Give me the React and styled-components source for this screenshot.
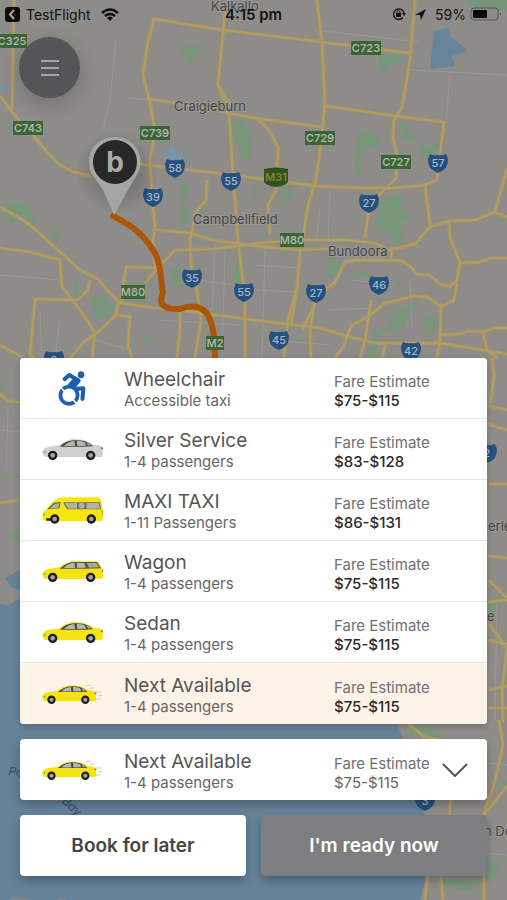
import { useState } from "react";
import styled, { createGlobalStyle } from "styled-components";
import { FaAccessibleIcon } from "react-icons/fa";

const TAXIS = [
  { id: "wheelchair", name: "Wheelchair", info: "Accessible taxi", fare: "$75-$115" },
  { id: "silver", name: "Silver Service", info: "1-4 passengers", fare: "$83-$128" },
  { id: "maxi", name: "MAXI TAXI", info: "1-11 Passengers", fare: "$86-$131" },
  { id: "wagon", name: "Wagon", info: "1-4 passengers", fare: "$75-$115" },
  { id: "sedan", name: "Sedan", info: "1-4 passengers", fare: "$75-$115" },
  { id: "next", name: "Next Available", info: "1-4 passengers", fare: "$75-$115" },
];

const MAIN_ROADS = [
  "M14 0L12 110",
  "M0 96L12 112L34 137L50 155Q60 168 75 172L92 177",
  "M140 164L190 170L232 175L316 186L360 188L395 188L425 185L437 180",
  "M410 53L352 46L322 42L223 30L154 19L148 42L143 75L149 99L155 130L150 160L152 200L155 225L152 250L156 268",
  "M225 12L218 85L229 112L233 175L235 200L238 240L245 300L245 358",
  "M218 85L230 105",
  "M149 99L190 105L253 118L322 127",
  "M317 0L322 42L325 105L320 150L316 180L308 205L303 238",
  "M300 250L297 290L291 325",
  "M415 0L410 60L402 108L394 120L393 138L397 155L396 178L380 194L368 215L365 238",
  "M326 106L395 116L444 122L437 180",
  "M257 119Q270 127 278 148L276 190L268 205L270 235",
  "M425 185L428 210L430 225",
  "M507 168L495 212L507 217",
  "M495 212L475 220L449 221L430 227L416 243L400 248L390 249",
  "M155 230L190 233L212 240L254 246L300 250L345 248",
  "M145 283L156 270L175 250L212 249L254 244L290 240L345 240L375 243L392 252L390 262",
  "M449 222L450 238L460 262L457 280L450 287L440 284L430 275L417 274L410 266L402 261L390 260L355 260L345 262L335 282L320 294L302 330",
  "M460 263L480 262L490 258L507 258",
  "M457 283L454 300L441 307L428 297L415 296L385 303L370 315L351 326L343 347L335 358",
  "M441 307L440 340L437 358",
  "M440 335L460 334L469 331L483 332L495 328L507 328",
  "M483 332L487 350L497 358",
  "M253 320L320 328L350 337L375 343L440 343L507 354",
  "M0 207L18 217L30 225L58 250L80 270L98 279L110 293L120 303L155 308L180 310L253 320",
  "M0 248L30 252L60 260L62 287L80 310L95 332L92 358",
  "M35 358L30 355L35 299L78 300L88 290L90 280",
  "M118 303L116 315L98 332L84 342L70 358",
  "M118 315L130 317L128 345L132 358",
  "M0 345L22 357",
  "M155 268L126 267L121 303",
  "M207 180L206 200L196 212L190 240L191 265L197 290L201 320L195 358",
  "M180 310L180 330L177 358",
  "M371 300L365 340L360 358",
  "M298 284L288 320L284 357",
  "M315 300L310 330L311 358",
  "M382 358L386 343",
  "M0 394L8 401L20 402",
  "M0 503L20 500",
  "M492 358L494 375L490 406L507 410",
  "M488 424L507 430",
  "M489 484L507 484",
  "M488 556L507 558",
  "M489 580L507 598",
  "M488 602L507 600",
  "M489 624L507 648",
  "M488 640L507 644",
  "M507 648L502 690L503 722",
  "M488 690L507 686",
  "M488 708L507 708",
  "M499 720L503 745L494 785L478 830L484 870L484 900",
  "M408 724L425 737L446 742L451 800L441 880L443 900",
  "M507 786L480 820",
  "M428 870L425 900",
];

const SIDE_ROADS =
  "M116 40L110 100L103 130M128 98L150 100M315 30L420 42M410 70L507 75M450 75L446 120M95 340L130 350M200 280L240 286M215 240L212 310M225 250L222 358M255 265L302 268M265 250L262 358M252 290L300 292M320 210L316 240M330 190L328 240M350 280L395 285M410 280L412 330M330 310L372 308M270 340L330 345M160 320L240 325M40 310L42 358M60 320L55 358M0 275L60 280M0 430L20 432M8 410L6 470M490 520L507 522M497 600L495 720M460 760L507 765M455 850L507 855";

const PARKS = [
  "M180 46L200 45V51L194 55L192 64L187 62L188 54L180 52Z",
  "M229 123L240 120L252 136L250 159L241 158Z",
  "M378 54L401 55V62L388 64V71L378 70Z",
  "M357 132L378 136L376 150L368 148L361 152L359 163L363 173L355 174L354 160L358 145Z",
  "M401 120L408 122V133L415 137L413 142L402 137Z",
  "M420 140L424 148L438 143L436 160L422 157Z",
  "M180 180L190 190L184 202L190 220L180 227L182 210Z",
  "M0 205L12 203L16 201L28 206L36 226L20 220L10 225Z",
  "M57 228L50 240L58 243Z",
  "M74 280L79 283L78 291L83 296L74 295Z",
  "M92 297L104 298L115 308L108 316L98 320L92 309Z",
  "M148 336L152 340L142 347L140 344Z",
  "M170 270L180 268L178 278L188 286L174 285Z",
  "M235 265L242 263L239 285L232 282Z",
  "M253 184L258 192L253 200Z",
  "M282 186L292 190L291 200L281 198Z",
  "M376 204L396 194L407 196L398 206L408 213V220L396 221L403 230L401 242L394 243L390 233L376 230L379 212Z",
  "M327 260L340 258L338 276L327 278Z",
  "M354 276L366 270L371 278L360 277L354 280Z",
  "M397 310L420 300L412 309L408 312L405 328L391 330L380 335L371 340L374 332L388 326Z",
  "M424 317L437 316L438 328L431 333L424 326Z",
  "M367 347L377 347L376 358H367Z",
  "M0 383L4 382L3 390H0Z",
  "M0 479L20 473V479Z",
  "M8 536L20 530V545Z",
  "M488 606L500 602L499 613L490 615Z",
  "M410 728L428 726L442 738L430 737L412 735Z",
  "M495 784L507 779V788Z",
  "M440 880L470 882L488 860L501 862L496 876L465 890L445 886Z",
];

const CODE_SIGNS = [
  [12, 41, "C325"],
  [28, 128, "C743"],
  [155, 133, "C739"],
  [366, 48, "C723"],
  [320, 138, "C729"],
  [396, 162, "C727"],
  [133, 292, "M80"],
  [292, 240, "M80"],
  [215, 343, "M2"],
];

const SHIELDS = [
  [175, 168, "58"],
  [231, 181, "55"],
  [153, 197, "39"],
  [438, 163, "57"],
  [369, 203, "27"],
  [192, 278, "35"],
  [244, 292, "55"],
  [316, 293, "27"],
  [379, 285, "46"],
  [279, 340, "45"],
  [411, 351, "42"],
  [54, 360, "8"],
  [487, 453, "2"],
  [425, 801, "3"],
];

const Map = () => (
  <MapCanvas viewBox="0 0 507 900" preserveAspectRatio="xMidYMid slice" aria-hidden="true">
    <defs>
      <radialGradient id="glow">
        <stop offset="0" stopColor="#000" stopOpacity=".3" />
        <stop offset="1" stopColor="#000" stopOpacity="0" />
      </radialGradient>
    </defs>
    <rect width="507" height="900" fill="#8e8c89" />
    <path d="M0 85L10 88L9 94L0 90Z" fill="#7d929d" />
    <path d="M430 67L434 31L443 29L448 27L451 37L467 49L466 52L452 56L455 66L432 69Z" fill="#68849a" />
    <path d="M465 0H507V12L470 6Z" fill="#779478" />
    <path d="M163 146L168 151L173 144L176 151L184 153L182 162H166Z" fill="#7894a6" />
    <path
      d="M0 603L8 606L20 598L120 596L300 620L397 724L404 740L418 775L424 815L428 870L420 900H0Z"
      fill="#658299"
    />
    <path d="M5 578L20 570V590L12 588Z" fill="#658299" />
    <path d="M8 900Q14 894 24 898L30 900ZM55 900Q62 896 68 900Z" fill="#7b898f" />
    {PARKS.map((d) => (
      <path key={d} d={d} fill="#78967a" />
    ))}
    <path d={SIDE_ROADS} fill="none" stroke="#999897" strokeWidth="1" />
    <g fill="none" strokeLinejoin="round">
      {MAIN_ROADS.map((d) => (
        <path key={d} d={d} stroke="#a39368" strokeWidth="4" />
      ))}
      {MAIN_ROADS.map((d) => (
        <path key={d} d={d} stroke="#b19d66" strokeWidth="2" />
      ))}
    </g>
    <g fill="#464646" stroke="#989693" strokeWidth="2" paintOrder="stroke" fontSize="13">
      <text x="211" y="11">Kalkallo</text>
      <text x="174" y="111">Craigieburn</text>
      <text x="193" y="224">Campbellfield</text>
      <text x="328" y="256">Bundoora</text>
      <text x="488" y="531">erle</text>
      <text x="487" y="621">e</text>
      <text x="484" y="836">n Do</text>
    </g>
    <g fill="#314e70" fontSize="12" fontStyle="italic">
      <text x="8" y="775" transform="rotate(8 8 775)">Port</text>
      <text x="61" y="802" transform="rotate(42 61 802)">Bay</text>
    </g>
    {CODE_SIGNS.map(([x, y, code]) => (
      <g key={`${x}-${code}`}>
        <rect
          x={x - code.length * 4 + (code.length === 4 ? 1 : 0)}
          y={y - 7}
          width={code.length * 8 - (code.length === 4 ? 2 : 0)}
          height="14"
          fill="#3b6535"
        />
        <text x={x} y={y + 4} fill="#afb3ab" fontSize="11" fontWeight="600" textAnchor="middle">
          {code}
        </text>
      </g>
    ))}
    <path d="M264 169Q276 166 288 169V182Q285 186 276 187Q267 186 264 182Z" fill="#30501f" />
    <text x="276" y="181" fill="#87891f" fontSize="11" fontWeight="600" textAnchor="middle">
      M31
    </text>
    <path
      d="M113 216C128 224 140 230 153 250C162 264 160 278 163 292L161 300C161 307 168 309 180 309C192 304 206 306 210 320Q215 330 215 362"
      fill="none"
      stroke="#aa570c"
      strokeWidth="6"
      strokeLinecap="round"
    />
    <rect x="206" y="336" width="18" height="14" fill="#3b6535" />
    <text x="215" y="347" fill="#afb3ab" fontSize="11" fontWeight="600" textAnchor="middle">
      M2
    </text>
    {SHIELDS.map(([x, y, num]) => (
      <g key={`${x}-${num}`}>
        <path
          transform={`translate(${x} ${y})`}
          d="M-8 -9Q-4 -7 0 -8Q4 -7 8 -9L10 -4Q10 5 4 8L0 10L-4 8Q-10 5 -10 -4Z"
          fill="#26507f"
        />
        <text x={x} y={y + 4} fill="#a9b5c2" fontSize="11" fontWeight="500" textAnchor="middle">
          {num}
        </text>
      </g>
    ))}
    <circle cx="117" cy="172" r="42" fill="url(#glow)" />
    <path d="M115 137A25 25 0 0 1 139 171L128 190L114 215L103 190L92 174A25 25 0 0 1 115 137Z" fill="#a5a5a5" />
    <circle cx="115" cy="162" r="22" fill="#272727" />
    <text x="115" y="172" fill="#aaa" fontSize="28" fontWeight="700" textAnchor="middle">
      b
    </text>
  </MapCanvas>
);

const Wheel = ({ x, y }) => (
  <g>
    <circle cx={x} cy={y} r="14" fill="#1e1e1e" />
    <circle cx={x} cy={y} r="7" fill="#a3a3a3" />
  </g>
);

const SEDAN_BODY =
  "M2 47Q-1 39 5 35Q10 26 35 24L52 22Q72 5 95 4Q125 2 145 14L156 20Q173 20 180 26L183 50Q182 57 176 57H15Q3 56 2 47Z";
const WAGON_BODY =
  "M2 47Q-1 39 5 35Q10 26 35 24L52 22Q72 5 95 4L165 4Q174 6 178 22L183 34V50Q182 57 176 57H15Q3 56 2 47Z";

const Sedan = ({ color = "#f5e414" }) => (
  <g>
    <path d="M84 5L88 1H98L101 5Z" fill="#e7e5dc" />
    <path d={SEDAN_BODY} fill={color} />
    <path d="M53 26Q74 7 96 7Q126 5 144 17L153 25L127 26Z" fill="#4a4a43" />
    <path d="M66 24Q78 10 97 9L99 24Z" fill="#b9b8ac" />
    <path d="M104 9Q123 8 129 14L132 23L106 24Z" fill="#b9b8ac" />
    <path d="M133 12L147 21L138 23Z" fill="#aaa89d" />
    <path d="M5 43L12 38L9 46Z" fill="#84805f" />
    <path d="M176 27L183 29V35L177 32Z" fill="#c45c49" />
    <Wheel x={32} y={52} />
    <Wheel x={146} y={52} />
  </g>
);

const Wagon = () => (
  <g>
    <path d="M84 5L88 1H98L101 5Z" fill="#e7e5dc" />
    <path d={WAGON_BODY} fill="#f5e414" />
    <path d="M53 26Q74 7 96 6L165 6L177 25L127 26Z" fill="#57574b" />
    <path d="M66 24Q78 9 97 9L99 24Z" fill="#b9b8ac" />
    <path d="M104 9H127L131 23L106 24Z" fill="#b9b8ac" />
    <path d="M134 9H163L172 22L141 23Z" fill="#a8a699" />
    <path d="M5 43L12 38L9 46Z" fill="#84805f" />
    <path d="M179 27L183 29V36L180 34Z" fill="#c45c49" />
    <Wheel x={32} y={52} />
    <Wheel x={146} y={52} />
  </g>
);

const Van = () => (
  <g>
    <path
      d="M2 58Q-1 46 5 37L14 30Q28 9 38 4Q48 -5 68 -5H166Q176 -4 177 6L183 34V60Q182 67 176 67H15Q3 67 2 58Z"
      fill="#f7e611"
    />
    <path d="M16 31L36 11L56 9L52 28Z" fill="#53534c" />
    <path d="M22 29L38 14L53 12L49 27Z" fill="#b3b1a2" />
    <path d="M64 10H174L177 31H76Q68 24 64 10Z" fill="#696858" />
    <path d="M68 12H105V29H79Q72 23 68 12ZM133 12H171L174 29H133Z" fill="#b3b1a2" />
    <circle cx="119" cy="20" r="10" fill="#b3b1a2" stroke="#777565" strokeWidth="2" />
    <path d="M12 58H28L24 65H14Z" fill="#2b2b27" />
    <path d="M2 48L11 42L7 51Z" fill="#9b987d" />
    <path d="M178 33L183 35V49L180 48Z" fill="#df9a3c" />
    <Wheel x={38} y={60} />
    <Wheel x={148} y={60} />
  </g>
);

const TaxiIcon = ({ type }) => {
  if (type === "wheelchair") return <WheelchairIcon aria-hidden="true" />;

  return (
    <CarIcon viewBox="0 -9 183 84" aria-hidden="true">
      {type === "silver" && <Sedan color="#cfcfd1" />}
      {type === "maxi" && <Van />}
      {type === "wagon" && <Wagon />}
      {type === "sedan" && <Sedan />}
      {type === "next" && (
        <g>
          <g transform="translate(0 4) scale(.89)">
            <Sedan />
          </g>
          <path
            d="M132 7H148M146 15H157M160 27H178M167 38H181M158 48H176"
            stroke="#b9b3a9"
            strokeWidth="2"
          />
        </g>
      )}
    </CarIcon>
  );
};

const TaxiDetails = ({ taxi, light }) => (
  <>
    <IconCell>
      <TaxiIcon type={taxi.id} />
    </IconCell>
    <TextCell>
      <Name>{taxi.name}</Name>
      <Info>{taxi.info}</Info>
    </TextCell>
    <TextCell>
      <FareLabel>Fare Estimate</FareLabel>
      <Fare $light={light}>{taxi.fare}</Fare>
    </TextCell>
  </>
);

const App = () => {
  const [selected, setSelected] = useState("next");
  const [open, setOpen] = useState(true);
  const current = TAXIS.find((taxi) => taxi.id === selected);

  return (
    <Screen>
      <GlobalStyle />
      <Map />
      <StatusBar>
        <StatusSide>
          <svg width="15" height="15" viewBox="0 0 15 15" aria-hidden="true">
            <rect width="15" height="15" rx="3" fill="#0c0c0c" />
            <path d="M9 3L5 7.5L9 12" fill="none" stroke="#aaa" strokeWidth="2" />
          </svg>
          <span>TestFlight</span>
          <WifiIcon viewBox="0 0 18 13" aria-hidden="true">
            <path d="M1 5Q9 -2 17 5M4 8Q9 4 14 8" fill="none" stroke="#0c0c0c" strokeWidth="2.500" />
            <path d="M6 10Q9 7 12 10L9 13Z" fill="#0c0c0c" />
          </WifiIcon>
        </StatusSide>
        <Time>4:15 pm</Time>
        <StatusSide $end>
          <svg width="14" height="14" viewBox="0 0 14 14" aria-hidden="true">
            <path d="M11 10.500A5.300 5.300 0 1 1 12 6" fill="none" stroke="#111" strokeWidth="1.300" />
            <path d="M10 6H14L12 9Z" fill="#111" />
            <rect x="4" y="6" width="5" height="4" fill="#111" />
            <path d="M5 6V5Q5 3.500 6.500 3.500T8 5V6" fill="none" stroke="#111" />
          </svg>
          <svg width="11" height="11" viewBox="0 0 11 11" aria-hidden="true">
            <path d="M0 6L11 0L6 11L5 6Z" fill="#111" />
          </svg>
          <Battery>
            59%
            <svg width="32" height="14" viewBox="0 0 32 14" aria-hidden="true">
              <rect x="1" y="1" width="27" height="12" rx="3" fill="none" stroke="#555453" />
              <rect x="3" y="3" width="14" height="8" rx="1" fill="#090909" />
              <path d="M30 5Q32 7 30 9Z" fill="#555453" />
            </svg>
          </Battery>
        </StatusSide>
      </StatusBar>
      <MenuButton type="button" aria-label="Menu">
        <svg width="18" height="18" viewBox="0 0 18 18" aria-hidden="true">
          <path d="M0 2H18M0 9H18M0 16H18" stroke="#a5a5a5" strokeWidth="2" />
        </svg>
      </MenuButton>
      <BookingPanel>
        {open && (
          <TaxiList>
            {TAXIS.map((taxi) => (
              <TaxiItem key={taxi.id}>
                <TaxiOption
                  type="button"
                  aria-pressed={taxi.id === selected}
                  $selected={taxi.id === selected}
                  onClick={() => setSelected(taxi.id)}
                >
                  <TaxiDetails taxi={taxi} />
                </TaxiOption>
              </TaxiItem>
            ))}
          </TaxiList>
        )}
        <CurrentTaxi type="button" aria-expanded={open} onClick={() => setOpen(!open)}>
          <TaxiDetails taxi={current} light />
          <Chevron viewBox="0 0 26 14" aria-hidden="true">
            <path d="M1 1L13 13L25 1" fill="none" stroke="#555" strokeWidth="2" />
          </Chevron>
        </CurrentTaxi>
        <Actions>
          <ActionButton type="button">Book for later</ActionButton>
          <ActionButton type="button" $primary>
            I'm ready now
          </ActionButton>
        </Actions>
      </BookingPanel>
    </Screen>
  );
};

const GlobalStyle = createGlobalStyle`
  * {
    box-sizing: border-box;
  }

  body {
    margin: 0;
    font-family: Inter, "Liberation Sans", sans-serif;
  }

  button {
    border: 0;
    font-family: inherit;
    cursor: pointer;
  }
`;

const Screen = styled.main`
  position: relative;
  isolation: isolate;
  display: flex;
  flex-direction: column;
  min-height: 100vh;
  overflow: hidden;
  background: #8e8c89;
`;

const MapCanvas = styled.svg`
  position: absolute;
  inset: 0;
  z-index: -1;
  width: 100%;
  height: 100%;
`;

const StatusBar = styled.header`
  display: grid;
  grid-template-columns: 1fr auto 1fr;
  align-items: center;
  height: 28px;
  padding: 0 5px;
  font-size: 14px;
  color: #111;
`;

const StatusSide = styled.div`
  display: flex;
  align-items: center;
  justify-content: ${({ $end }) => ($end ? "flex-end" : "flex-start")};
  gap: ${({ $end }) => ($end ? "9px" : "6px")};
`;

const WifiIcon = styled.svg`
  width: 18px;
  height: 13px;
  margin-left: 4px;
`;

const Time = styled.time`
  font-size: 15px;
  font-weight: 600;
`;

const Battery = styled.span`
  display: flex;
  align-items: center;
  gap: 4px;
`;

const MenuButton = styled.button`
  display: flex;
  align-items: center;
  justify-content: center;
  width: 61px;
  height: 61px;
  margin: 9px 0 0 19px;
  padding: 0;
  border-radius: 50%;
  background: #555457;
  box-shadow: 0 6px 20px rgba(0, 0, 0, 0.2);
`;

const BookingPanel = styled.section`
  display: flex;
  flex-direction: column;
  gap: 15px;
  margin-top: auto;
  padding: 24px 20px;
`;

const TaxiList = styled.ul`
  margin: 0;
  padding: 0;
  border-radius: 4px;
  overflow: hidden;
  list-style: none;
  background: #fff;
  box-shadow: 0 2px 6px rgba(0, 0, 0, 0.2);
`;

const TaxiItem = styled.li`
  & + & {
    border-top: 1px solid #e6e6e6;
  }
`;

const TaxiOption = styled.button`
  display: grid;
  grid-template-columns: 104px 1fr 153px;
  align-items: end;
  width: 100%;
  height: 60px;
  padding: 0 0 8px;
  text-align: left;
  background: ${({ $selected }) => ($selected ? "#fdf3e7" : "#fff")};

  ${TaxiItem}:last-child & {
    height: 61px;
  }
`;

const CurrentTaxi = styled.button`
  display: grid;
  grid-template-columns: 104px 1fr 108px 45px;
  align-items: end;
  width: 100%;
  height: 61px;
  padding: 8px 0;
  border-radius: 4px;
  text-align: left;
  background: #fff;
  box-shadow: 0 5px 8px rgba(0, 0, 0, 0.25);
`;

const IconCell = styled.span`
  display: flex;
  align-items: center;
  justify-content: center;
  height: 44px;
`;

const WheelchairIcon = styled(FaAccessibleIcon)`
  width: 30px;
  height: 35px;
  color: #1b60ad;
`;

const CarIcon = styled.svg`
  width: 61px;
  height: 28px;
`;

const TextCell = styled.span`
  display: flex;
  flex-direction: column;
  white-space: nowrap;
`;

const Name = styled.span`
  font-size: 19px;
  line-height: 24px;
  color: #555;
`;

const Info = styled.span`
  font-size: 15px;
  line-height: 18px;
  color: #666;
`;

const FareLabel = styled.span`
  font-size: 15px;
  line-height: 20px;
  color: #707070;
`;

const Fare = styled.span`
  font-size: 15px;
  font-weight: ${({ $light }) => ($light ? 400 : 500)};
  line-height: 18px;
  color: ${({ $light }) => ($light ? "#666" : "#2b2b2b")};
`;

const Chevron = styled.svg`
  align-self: center;
  width: 26px;
  height: 14px;
`;

const Actions = styled.div`
  display: grid;
  grid-template-columns: 1fr 1fr;
  gap: 15px;
`;

const ActionButton = styled.button`
  height: 61px;
  padding: 0;
  border-radius: 4px;
  font-size: 19px;
  font-weight: 600;
  color: ${({ $primary }) => ($primary ? "#fff" : "#454545")};
  background: ${({ $primary }) => ($primary ? "#7e7d80" : "#fff")};
  box-shadow: 0 5px 8px rgba(0, 0, 0, 0.25);
`;

export default App;
